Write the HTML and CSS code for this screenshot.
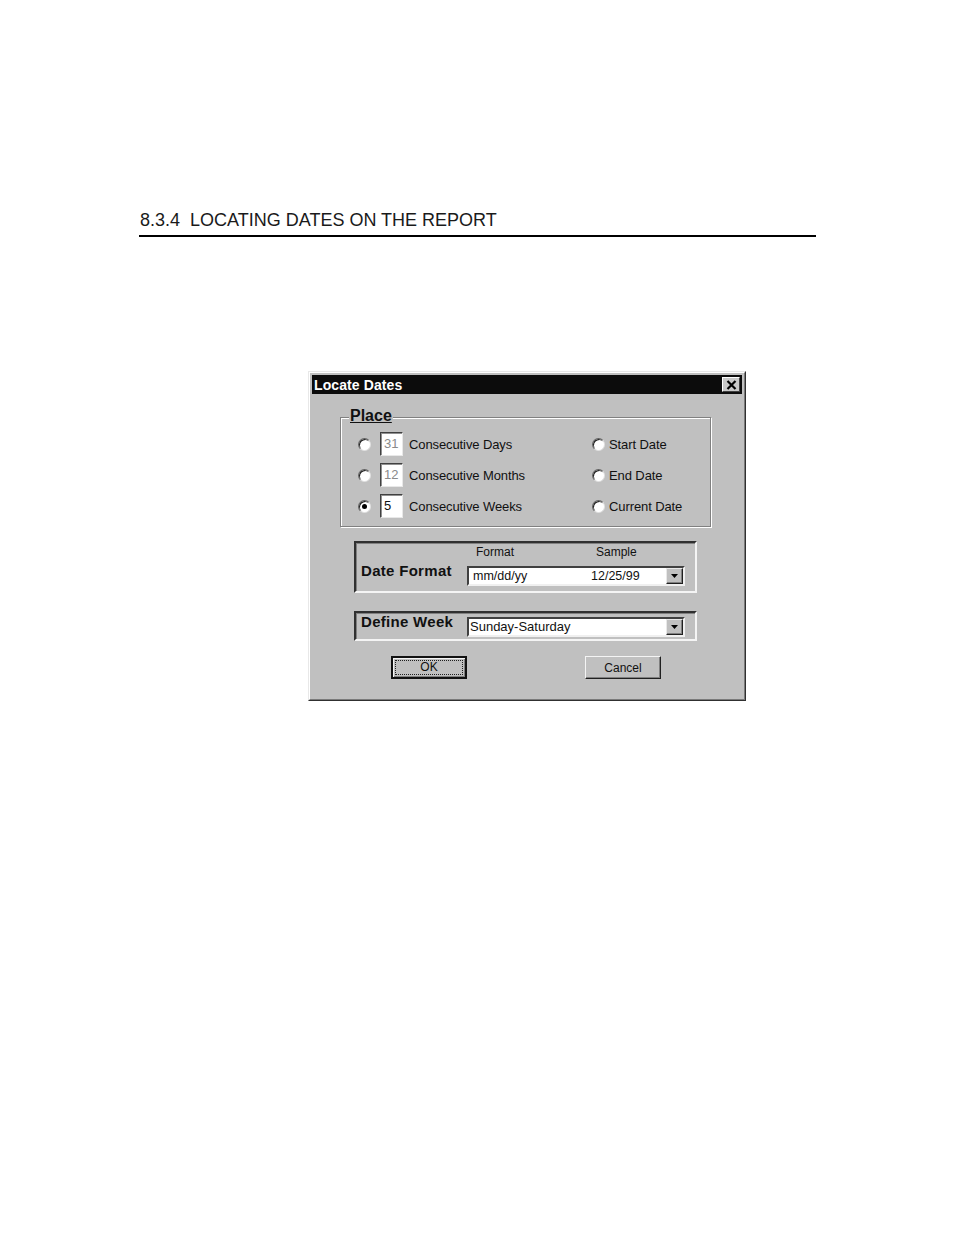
FILE: index.html
```html
<!DOCTYPE html>
<html>
<head>
<meta charset="utf-8">
<link rel="stylesheet" href="styles.css">
</head>
<body>
<div class="page">
  <h1 class="heading">8.3.4&nbsp;&nbsp;LOCATING DATES ON THE REPORT</h1>
  <div class="dialog-wrap">
    <div class="dialog">
      <div class="dialog-inner">
        <div class="titlebar">
          <span class="title">Locate Dates</span>
          <span class="close">
            <svg width="11" height="10" viewBox="0 0 11 10"><path d="M1.5 1 L9.5 9 M9.5 1 L1.5 9" stroke="#000" stroke-width="2.2"/></svg>
          </span>
        </div>
        <div class="body">
          <fieldset class="place">
            <legend class="legend">Place</legend>
            <div class="row">
              <div class="left">
                <span class="radio"></span>
                <span class="num dim">31</span>
                <span class="lbl">Consecutive Days</span>
              </div>
              <div class="right">
                <span class="radio"></span>
                <span class="lbl">Start Date</span>
              </div>
            </div>
            <div class="row">
              <div class="left">
                <span class="radio"></span>
                <span class="num dim">12</span>
                <span class="lbl">Consecutive Months</span>
              </div>
              <div class="right">
                <span class="radio"></span>
                <span class="lbl">End Date</span>
              </div>
            </div>
            <div class="row">
              <div class="left">
                <span class="radio checked"></span>
                <span class="num">5</span>
                <span class="lbl">Consecutive Weeks</span>
              </div>
              <div class="right">
                <span class="radio"></span>
                <span class="lbl">Current Date</span>
              </div>
            </div>
          </fieldset>

          <div class="panel panel-format">
            <div class="plabel">Date Format</div>
            <div class="pcontrol">
              <div class="colheads"><span class="ch1">Format</span><span class="ch2">Sample</span></div>
              <div class="combo">
                <span class="cval">mm/dd/yy</span>
                <span class="cval2">12/25/99</span>
                <span class="dropbtn"><svg width="7" height="4" viewBox="0 0 7 4"><path d="M0 0 H7 L3.5 4 Z" fill="#000"/></svg></span>
              </div>
            </div>
          </div>

          <div class="panel panel-week">
            <div class="plabel">Define Week</div>
            <div class="pcontrol">
              <div class="combo">
                <span class="cval week">Sunday-Saturday</span>
                <span class="dropbtn"><svg width="7" height="4" viewBox="0 0 7 4"><path d="M0 0 H7 L3.5 4 Z" fill="#000"/></svg></span>
              </div>
            </div>
          </div>

          <div class="buttons">
            <button class="btn btn-default"><span class="focus">OK</span></button>
            <button class="btn">Cancel</button>
          </div>
        </div>
      </div>
    </div>
  </div>
</div>
</body>
</html>
```

FILE: styles.css
```css
html, body {
  margin: 0;
  padding: 0;
  background: #fff;
}
.page {
  padding: 207px 138px 0 139px;
}
.heading {
  margin: 0;
  font-family: "Liberation Sans", Arial, sans-serif;
  font-weight: normal;
  font-size: 18px;
  line-height: 26px;
  color: #1a1a1a;
  letter-spacing: 0;
  padding-left: 1px;
  border-bottom: 2px solid #000;
  padding-bottom: 2px;
}
.dialog-wrap {
  padding-top: 134px;
  padding-left: 169px;
}
.dialog {
  width: 436px;
  height: 328px;
  background: #c0c0c0;
  border: 1px solid;
  border-color: #e8e8e8 #303030 #303030 #e8e8e8;
  font-family: "Liberation Sans", Arial, sans-serif;
}
.dialog-inner {
  height: 100%;
  box-sizing: border-box;
  border: 1px solid;
  border-color: #ffffff #7a7a7a #7a7a7a #ffffff;
  padding: 2px;
}
.titlebar {
  height: 19px;
  background: #0c0c0c;
  display: flex;
  align-items: center;
  justify-content: space-between;
  padding: 0 2px 0 2px;
}
.title {
  color: #fff;
  font-weight: bold;
  font-size: 14px;
  letter-spacing: 0.1px;
}
.close {
  width: 18px;
  height: 15px;
  box-sizing: border-box;
  background: #c8c8c8;
  border: 1px solid;
  border-color: #fff #404040 #404040 #fff;
  display: flex;
  align-items: center;
  justify-content: center;
}
.body {
  padding: 23px 0 0 28px;
}
.place {
  width: 371px;
  box-sizing: border-box;
  margin: 0;
  padding: 14px 0 8px 17px;
  border: 1px solid #808080;
  box-shadow: 1px 1px 0 #fff, inset 1px 1px 0 #fff;
  position: relative;
}
.legend {
  font-weight: bold;
  font-size: 16px;
  text-decoration: underline;
  color: #111;
  line-height: 14px;
}
.place .legend {
  position: absolute;
  top: -9px;
  left: 8px;
  padding: 0 1px;
  background: #c0c0c0;
  margin: 0;
}
.row {
  display: flex;
  align-items: center;
  height: 24px;
  margin-bottom: 7px;
}
.row:last-child { margin-bottom: 0; }
.left {
  width: 234px;
  display: flex;
  align-items: center;
}
.right {
  display: flex;
  align-items: center;
}
.radio {
  width: 13px;
  height: 13px;
  border-radius: 50%;
  background: #fff;
  box-sizing: border-box;
  border: 1px solid;
  border-color: #606060 #e0e0e0 #e0e0e0 #606060;
  box-shadow: inset 1px 1px 0 #202020;
  flex: none;
  position: relative;
}
.radio.checked::after {
  content: "";
  position: absolute;
  left: 3px;
  top: 3px;
  width: 5px;
  height: 5px;
  border-radius: 50%;
  background: #000;
}
.left .radio { margin-right: 9px; }
.right .radio { margin-right: 4px; }
.num {
  width: 23px;
  height: 24px;
  box-sizing: border-box;
  background: #fff;
  border: 1px solid;
  border-color: #404040 #e8e8e8 #e8e8e8 #404040;
  box-shadow: inset 1px 1px 0 #909090;
  font-size: 13px;
  line-height: 22px;
  padding-left: 3px;
  color: #111;
  margin-right: 6px;
}
.num.dim { color: #8a8a8a; }
.lbl {
  font-size: 13px;
  color: #111;
  letter-spacing: -0.1px;
}
.panel {
  width: 343px;
  box-sizing: border-box;
  margin-left: 14px;
  border: 2px solid;
  border-color: #303030 #f4f4f4 #f4f4f4 #303030;
  box-shadow: inset 1px 1px 0 #808080;
  display: flex;
  align-items: flex-start;
  padding-left: 5px;
}
.panel-format {
  margin-top: 14px;
  height: 52px;
}
.panel-week {
  margin-top: 18px;
  height: 30px;
  padding-top: 4px;
}
.plabel {
  width: 106px;
  flex: none;
  font-weight: bold;
  font-size: 15px;
  line-height: 16px;
  color: #111;
  letter-spacing: 0.3px;
}
.panel-format .plabel { padding-top: 20px; }
.panel-week .plabel { margin-top: -3px; }
.pcontrol { flex: none; }
.colheads {
  position: relative;
  height: 23px;
  font-size: 12px;
  color: #111;
}
.ch1 { position: absolute; left: 9px; top: 2px; }
.ch2 { position: absolute; left: 129px; top: 2px; }
.combo {
  width: 218px;
  height: 20px;
  box-sizing: border-box;
  background: #fff;
  border: 2px solid;
  border-color: #404040 #f0f0f0 #f0f0f0 #404040;
  position: relative;
  font-size: 13px;
  color: #111;
}
.cval { position: absolute; left: 4px; top: 0; line-height: 16px; font-size: 12.5px; }
.cval.week { left: 1px; font-size: 13px; }
.cval2 { position: absolute; left: 122px; top: 0; line-height: 16px; font-size: 12.5px; }
.dropbtn {
  position: absolute;
  right: 0;
  top: 0;
  width: 17px;
  height: 16px;
  box-sizing: border-box;
  background: #c0c0c0;
  border: 1px solid;
  border-color: #e8e8e8 #202020 #202020 #e8e8e8;
  box-shadow: inset -1px -1px 0 #808080;
  display: flex;
  align-items: center;
  justify-content: center;
}
.buttons {
  display: flex;
  margin-top: 15px;
  padding-left: 51px;
}
.btn {
  width: 76px;
  height: 23px;
  box-sizing: border-box;
  background: #c0c0c0;
  border: 1px solid;
  border-color: #f4f4f4 #202020 #202020 #f4f4f4;
  box-shadow: inset -1px -1px 0 #808080;
  font-family: "Liberation Sans", Arial, sans-serif;
  font-size: 12px;
  color: #111;
  padding: 0;
  margin: 0;
}
.btn + .btn { margin-left: 118px; }
.btn-default {
  border: 2px solid #111;
  box-shadow: inset 1px 1px 0 #f4f4f4, inset -1px -1px 0 #808080;
  display: flex;
  padding: 2px;
}
.focus {
  flex: 1;
  border: 1px dotted #202020;
  line-height: 13px;
}
```
